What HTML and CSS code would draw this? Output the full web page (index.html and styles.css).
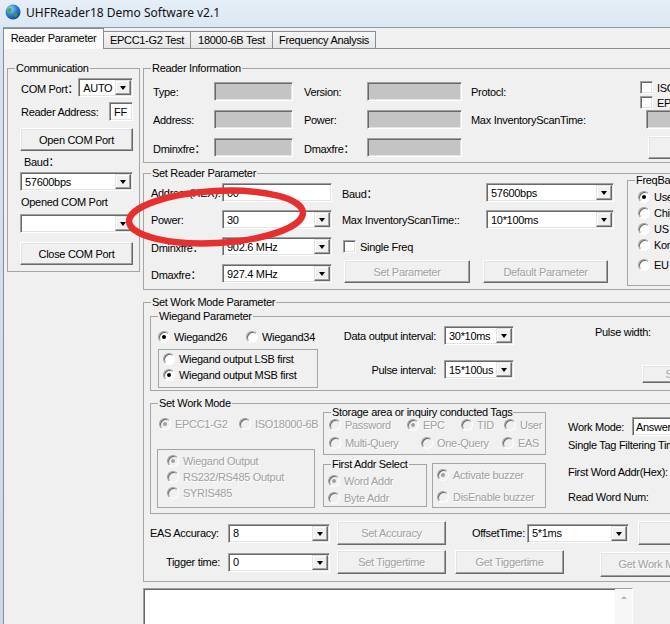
FILE: index.html
```html
<!DOCTYPE html>
<html lang="en">
<head>
  <meta charset="UTF-8">
  <title>UHFReader18 Demo Software v2.1</title>
  <link rel="stylesheet" href="styles.css">
</head>
<body>
<div class="window">
  <div class="titlebar">
    <svg class="app-icon" viewBox="0 0 16 16">
      <defs>
        <radialGradient id="sea" cx="0.35" cy="0.3" r="0.8">
          <stop offset="0" stop-color="#9ad6ff"/>
          <stop offset="0.5" stop-color="#2f7fd6"/>
          <stop offset="1" stop-color="#0d3c8c"/>
        </radialGradient>
      </defs>
      <circle cx="8" cy="8" r="7.5" fill="url(#sea)"/>
      <path d="M3 5 C5 3 7 4 7 6 C6 8 4 8 4 10 C3 9 2 7 3 5Z" fill="#4caf3c"/>
      <path d="M9 9 C11 8 13 9 12 12 C11 14 9 13 9 11Z" fill="#3f9a32"/>
    </svg>
    <span class="title">UHFReader18 Demo Software v2.1</span>
  </div>

  <div class="client">
    <div class="tabs">
      <div class="tab active t1">Reader Parameter</div>
      <div class="tab t2">EPCC1-G2 Test</div>
      <div class="tab t3">18000-6B Test</div>
      <div class="tab t4">Frequency Analysis</div>
    </div>

    <div class="panel">
      <!-- communication -->
      <fieldset class="group comm">
        <legend>Communication</legend>
        <div class="comm-body">
          <div class="line r1"><span class="lbl">COM Port：</span><div class="field w60">AUTO<span class="drop"></span></div></div>
          <div class="line r2"><span class="lbl">Reader Address:</span><div class="field w24">FF</div></div>
          <div class="btn wide r3">Open COM Port</div>
          <span class="lbl baud">Baud：</span>
          <div class="field wide r5">57600bps<span class="drop"></span></div>
          <span class="lbl opened">Opened COM Port</span>
          <div class="field wide r7"><span class="drop"></span></div>
          <div class="btn wide r8">Close COM Port</div>
        </div>
      </fieldset>

      <div class="main">
        <!-- reader information -->
        <fieldset class="group info">
          <legend>Reader Information</legend>
          <div class="info-grid">
            <span class="lbl lead">Type:</span><div class="field ro"></div>
            <span class="lbl mid">Version:</span><div class="field ro"></div>
            <span class="lbl tail">Protocl:</span>
            <div class="checks">
              <label class="chk"><span class="cb"></span>ISO18000-6B</label>
              <label class="chk"><span class="cb"></span>EPCC1-G2</label>
            </div>
            <span class="lbl lead">Address:</span><div class="field ro"></div>
            <span class="lbl mid">Power:</span><div class="field ro"></div>
            <span class="lbl tail">Max InventoryScanTime:</span>
            <div class="field ro scan"></div>
            <span class="lbl lead">Dminxfre：</span><div class="field ro"></div>
            <span class="lbl mid">Dmaxfre：</span><div class="field ro"></div>
            <span></span>
            <div class="btn info-btn"></div>
          </div>
        </fieldset>

        <!-- set reader parameter -->
        <fieldset class="group setparam">
          <legend>Set Reader Parameter</legend>
          <div class="param-grid">
            <fieldset class="group freq">
              <legend>FreqBand</legend>
              <div class="freq-list">
                <label class="opt"><span class="rd on"></span>User band</label>
                <label class="opt"><span class="rd"></span>Chinese band</label>
                <label class="opt"><span class="rd"></span>US band</label>
                <label class="opt"><span class="rd"></span>Korean band</label>
                <label class="opt eu"><span class="rd"></span>EU band</label>
              </div>
            </fieldset>
            <span class="lbl lead">Address(HEX):</span>
            <div class="field">00</div>
            <span class="lbl mid">Baud：</span>
            <div class="field">57600bps<span class="drop"></span></div>
            <span class="lbl lead">Power:</span>
            <div class="field">30<span class="drop"></span></div>
            <span class="lbl mid">Max InventoryScanTime::</span>
            <div class="field">10*100ms<span class="drop"></span></div>
            <span class="lbl lead">Dminxfre：</span>
            <div class="field">902.6 MHz<span class="drop"></span></div>
            <label class="chk single"><span class="cb"></span>Single Freq</label>
            <span></span>
            <span class="lbl lead">Dmaxfre：</span>
            <div class="field">927.4 MHz<span class="drop"></span></div>
            <div class="btn off set-btn">Set Parameter</div>
            <div class="btn off def-btn">Default Parameter</div>
          </div>
        </fieldset>

        <!-- set work mode parameter -->
        <fieldset class="group params">
          <legend>Set Work Mode Parameter</legend>
          <div class="params-body">
            <fieldset class="group wiegand">
              <legend>Wiegand Parameter</legend>
              <div class="wg-body">
                <div class="wg-left">
                  <div class="opts">
                    <label class="opt w88"><span class="rd on"></span>Wiegand26</label>
                    <label class="opt"><span class="rd"></span>Wiegand34</label>
                  </div>
                  <div class="box wg-box">
                    <label class="opt"><span class="rd"></span>Wiegand output LSB first</label>
                    <label class="opt"><span class="rd on"></span>Wiegand output MSB first</label>
                  </div>
                </div>
                <div class="wg-mid">
                  <span class="lbl">Data output interval:</span>
                  <div class="field">30*10ms<span class="drop"></span></div>
                  <span class="lbl">Pulse interval:</span>
                  <div class="field">15*100us<span class="drop"></span></div>
                </div>
                <div class="wg-right">
                  <span class="lbl">Pulse width:</span>
                  <div class="btn off pulse-btn">Set Parameter</div>
                </div>
              </div>
            </fieldset>

            <fieldset class="group workmode">
              <legend>Set Work Mode</legend>
              <div class="wm-body">
                <div class="wm-left off">
                  <div class="opts">
                    <label class="opt w80"><span class="rd on"></span>EPCC1-G2</label>
                    <label class="opt"><span class="rd"></span>ISO18000-6B</label>
                  </div>
                  <div class="box out-box">
                    <label class="opt"><span class="rd on"></span>Wiegand Output</label>
                    <label class="opt"><span class="rd"></span>RS232/RS485 Output</label>
                    <label class="opt"><span class="rd"></span>SYRIS485</label>
                  </div>
                </div>
                <div class="wm-mid">
                  <fieldset class="group storage">
                    <legend>Storage area or inquiry conducted Tags</legend>
                    <div class="storage-body off">
                      <div class="opts">
                        <label class="opt w78"><span class="rd"></span>Password</label>
                        <label class="opt w54"><span class="rd on"></span>EPC</label>
                        <label class="opt w43"><span class="rd"></span>TID</label>
                        <label class="opt"><span class="rd"></span>User</label>
                      </div>
                      <div class="opts gap2">
                        <label class="opt w92"><span class="rd"></span>Multi-Query</label>
                        <label class="opt w81"><span class="rd"></span>One-Query</label>
                        <label class="opt"><span class="rd"></span>EAS</label>
                      </div>
                    </div>
                  </fieldset>
                  <div class="opts lower">
                    <fieldset class="group first-addr">
                      <legend>First Addr Select</legend>
                      <div class="addr-body off">
                        <label class="opt"><span class="rd on"></span>Word Addr</label>
                        <label class="opt"><span class="rd"></span>Byte Addr</label>
                      </div>
                    </fieldset>
                    <div class="box buzzer off">
                      <label class="opt"><span class="rd on"></span>Activate buzzer</label>
                      <label class="opt"><span class="rd"></span>DisEnable buzzer</label>
                    </div>
                  </div>
                </div>
                <div class="wm-right">
                  <div class="line mode-line"><span class="lbl">Work Mode:</span><div class="field mode">Answer Mode</div></div>
                  <span class="lbl filter">Single Tag Filtering Time:</span>
                  <span class="lbl word-addr">First Word Addr(Hex):</span>
                  <span class="lbl word-num">Read Word Num:</span>
                </div>
              </div>
            </fieldset>

            <div class="act-row first">
              <span class="lbl act-lbl">EAS Accuracy:</span>
              <div class="field w102">8<span class="drop"></span></div>
              <div class="btn off act-btn">Set Accuracy</div>
              <span class="lbl offset-lbl">OffsetTime:</span>
              <div class="field w102">5*1ms<span class="drop"></span></div>
              <div class="btn off offset-btn">Set OffsetTime</div>
            </div>
            <div class="act-row second">
              <span class="lbl act-lbl right">Tigger time:</span>
              <div class="field w102">0<span class="drop"></span></div>
              <div class="btn off act-btn">Set Tiggertime</div>
              <div class="btn off act-btn get">Get Tiggertime</div>
              <div class="btn off getwork-btn">Get Work Mode</div>
            </div>
          </div>
        </fieldset>

        <div class="log">
          <div class="scroll"><span class="up"></span></div>
        </div>
      </div>
    </div>
  </div>

  <svg class="mark" viewBox="0 0 670 624">
    <ellipse cx="216" cy="217" rx="87" ry="26" transform="rotate(-3 216 217)" fill="none" stroke="#e62f2f" stroke-width="6.5"/>
  </svg>
</div>
</body>
</html>
```

FILE: styles.css
```css
* {
  box-sizing: border-box;
}
body {
  margin: 0;
  width: 670px;
  height: 624px;
  overflow: hidden;
  font-family: "Liberation Sans", "Noto Sans CJK SC", sans-serif;
  font-size: 11px;
  letter-spacing: -0.3px;
  color: #000;
}
.window {
  position: relative;
  height: 624px;
  background: linear-gradient(#e6eff8, #d6e3f0 40px, #c9d9e9);
}

/* title bar */
.titlebar {
  height: 27px;
  display: flex;
  align-items: center;
  gap: 5px;
  padding: 0 0 3px 5px;
}
.app-icon {
  width: 16px;
  height: 16px;
}
.title {
  font-family: "Noto Sans", sans-serif;
  font-size: 12px;
  letter-spacing: 0;
  color: #111;
}

/* client + tabs */
.client {
  margin-left: 3px;
  height: 597px;
  display: flex;
  flex-direction: column;
  background: #f0f0f0;
  border-top: 1px solid #8e9aa7;
}
.tabs {
  display: flex;
  align-items: flex-end;
  height: 20px;
  position: relative;
  z-index: 1;
}
.tab {
  height: 17px;
  margin-left: -1px;
  display: flex;
  align-items: center;
  justify-content: center;
  border: 1px solid #898c95;
  border-bottom: none;
  background: linear-gradient(#f6f6f6, #e5e5e5);
  white-space: nowrap;
}
.tab.active {
  height: 21px;
  margin: 0 0 -1px 0;
  padding-bottom: 2px;
  background: #fafafa;
  position: relative;
  z-index: 1;
}
.t1 { width: 101px; }
.t2 { width: 88px; }
.t3 { width: 83px; }
.t4 { width: 104px; }

.panel {
  flex: 1;
  display: flex;
  align-items: flex-start;
  gap: 3px;
  padding: 12px 0 0 3px;
  border-top: 1px solid #898c95;
  border-left: 1px solid #898c95;
}

/* common controls */
.group {
  margin: 0;
  padding: 0;
  min-width: 0;
  border: 1px solid #a5a5a5;
}
.group > legend {
  margin-left: 7px;
  padding: 0 1px;
  line-height: 14px;
}
.lbl {
  white-space: nowrap;
}
.line {
  display: flex;
  align-items: center;
  justify-content: space-between;
  height: 19px;
}
.field {
  height: 19px;
  display: flex;
  align-items: center;
  padding: 0 1px 0 4px;
  background: #fff;
  border: 1px solid;
  border-color: #a0a0a0 #fff #fff #a0a0a0;
  box-shadow: inset 1px 1px 0 #696969, inset -1px -1px 0 #e3e3e3;
  white-space: nowrap;
  overflow: hidden;
}
.field.ro {
  background: #c4c4c4;
}
.drop {
  margin-left: auto;
  width: 16px;
  height: 15px;
  flex: none;
  position: relative;
  background: #f0f0f0;
  border: 1px solid;
  border-color: #e3e3e3 #696969 #696969 #e3e3e3;
  box-shadow: inset -1px -1px 0 #a0a0a0, inset 1px 1px 0 #fff;
}
.drop::after {
  content: "";
  position: absolute;
  left: 4px;
  top: 5px;
  border-left: 3.5px solid transparent;
  border-right: 3.5px solid transparent;
  border-top: 4px solid #000;
}
.btn {
  height: 23px;
  display: flex;
  align-items: center;
  justify-content: center;
  flex: none;
  background: #f0f0f0;
  border: 1px solid;
  border-color: #fff #696969 #696969 #fff;
  box-shadow: inset -1px -1px 0 #a0a0a0, inset 1px 1px 0 #e3e3e3;
  white-space: nowrap;
}
.off,
.off .opt {
  color: #a0a0a0;
  text-shadow: 1px 1px 0 #fff;
}
.opts {
  display: flex;
}
.opt {
  display: flex;
  align-items: center;
  gap: 4px;
  height: 16px;
  flex: none;
  white-space: nowrap;
}
.rd {
  width: 12px;
  height: 12px;
  flex: none;
  position: relative;
  border-radius: 50%;
  background: #fff;
  border: 1px solid;
  border-color: #a0a0a0 #fff #fff #a0a0a0;
  box-shadow: inset 1px 1px 0 #696969;
}
.rd.on::after {
  content: "";
  position: absolute;
  left: 3px;
  top: 3px;
  width: 4px;
  height: 4px;
  border-radius: 50%;
  background: #000;
}
.off .rd {
  background: #f0f0f0;
}
.off .rd.on::after {
  background: #a0a0a0;
}
.chk {
  display: flex;
  align-items: center;
  gap: 4px;
  white-space: nowrap;
}
.cb {
  width: 13px;
  height: 13px;
  flex: none;
  background: #fff;
  border: 1px solid;
  border-color: #a0a0a0 #fff #fff #a0a0a0;
  box-shadow: inset 1px 1px 0 #696969, inset -1px -1px 0 #e3e3e3;
}
.box {
  border: 1px solid #a5a5a5;
}
.w24 { width: 24px; }
.w43 { width: 43px; }
.w54 { width: 54px; }
.w60 { width: 60px; }
.w78 { width: 78px; }
.w80 { width: 80px; }
.w81 { width: 81px; }
.w88 { width: 88px; }
.w92 { width: 92px; }
.w102 { width: 102px; }

/* communication */
.comm {
  width: 133px;
  flex: none;
}
.comm-body {
  display: flex;
  flex-direction: column;
  align-items: flex-start;
  padding: 0 0 6px 12px;
}
.comm-body .line {
  width: 113px;
}
.comm-body .line .lbl {
  padding-left: 1px;
}
.wide { width: 113px; }
.r1 { margin-top: 3px; }
.r2 { margin-top: 5px; }
.r3 { margin-top: 7px; }
.baud {
  margin-top: 5px;
  padding-left: 4px;
  line-height: 13px;
}
.r5 { margin-top: 3px; }
.opened {
  margin-top: 5px;
  padding-left: 1px;
  line-height: 13px;
}
.r7 { margin-top: 5px; }
.r8 { margin-top: 9px; }

/* right column */
.main {
  width: 580px;
  flex: none;
  display: flex;
  flex-direction: column;
}

.info-grid {
  display: grid;
  grid-template-columns: 70px 79px 74px 95px 177px 1fr;
  grid-template-rows: repeat(3, 19px);
  row-gap: 9px;
  align-items: center;
  padding: 7px 0 5px;
}
.info-grid .lead { padding-left: 9px; }
.info-grid .mid { padding-left: 11px; }
.info-grid .tail { padding-left: 9px; }
.checks {
  align-self: start;
  margin: -2px 0 0 1px;
}
.checks .chk {
  height: 15px;
}
.info-grid .scan {
  justify-self: start;
  width: 60px;
  margin-left: 7px;
}
.info-btn {
  justify-self: start;
  width: 80px;
  margin-left: 9px;
}

.setparam {
  margin-top: 3px;
}
.param-grid {
  display: grid;
  grid-template-columns: 78px 110px 154px 128px 1fr;
  grid-template-rows: repeat(4, 19px);
  row-gap: 8px;
  align-items: center;
  padding: 3px 0 6px;
}
.param-grid .lead { padding-left: 7px; }
.param-grid .mid { padding-left: 10px; }
.single {
  margin-left: 11px;
}
.set-btn {
  align-self: end;
  width: 126px;
  margin-left: 12px;
}
.def-btn {
  align-self: end;
  width: 125px;
  margin-left: -3px;
}
.freq {
  grid-column: 5;
  grid-row: 1 / 5;
  align-self: start;
  width: 90px;
  height: 113px;
  margin: -10px 0 0 13px;
}
.freq-list {
  padding: 2px 0 0 10px;
}
.freq-list .eu {
  margin-top: 4px;
}

/* work mode parameter */
.params {
  margin-top: 5px;
}
.params-body {
  padding: 0 0 7px 6px;
}
.wiegand {
  width: 570px;
}
.wg-body {
  display: flex;
  align-items: flex-start;
  padding: 0 0 2px 7px;
}
.wg-left {
  width: 160px;
  flex: none;
}
.wg-left .opts {
  margin-top: 6px;
}
.wg-box {
  margin-top: 4px;
  height: 39px;
  padding: 1px 0 0 4px;
}
.wg-mid {
  margin: 3px 0 0 24px;
  display: grid;
  grid-template-columns: 102px 70px;
  grid-template-rows: 19px 19px;
  row-gap: 15px;
  align-items: center;
}
.wg-mid .lbl {
  text-align: right;
  padding-right: 8px;
}
.wg-right {
  margin: 3px 0 0 81px;
  display: flex;
  flex-direction: column;
  align-items: flex-start;
}
.wg-right .lbl {
  line-height: 13px;
}
.pulse-btn {
  width: 114px;
  height: 18px;
  margin: 26px 0 0 47px;
}

.workmode {
  width: 570px;
  margin-top: 5px;
}
.wm-body {
  display: flex;
  align-items: flex-start;
  padding: 0 0 5px 6px;
}
.wm-left {
  width: 158px;
  flex: none;
}
.wm-left .opts {
  margin: 6px 0 0 2px;
}
.out-box {
  margin-top: 17px;
  height: 59px;
  padding: 3px 0 0 9px;
}
.wm-mid {
  width: 223px;
  flex: none;
  margin-left: 8px;
}
.storage {
  margin-top: -5px;
}
.storage-body {
  margin-top: -2px;
  padding: 0 0 3px 5px;
}
.gap2 {
  margin-top: 2px;
}
.lower {
  align-items: flex-start;
}
.first-addr {
  width: 104px;
  flex: none;
  margin-top: 2px;
}
.addr-body {
  display: flex;
  flex-direction: column;
  gap: 2px;
  padding: 2px 0 1px 4px;
}
.addr-body .opt {
  height: 15px;
}
.buzzer {
  width: 114px;
  height: 45px;
  flex: none;
  margin: 8px 0 0 5px;
  padding: 3px 0 0 4px;
  display: flex;
  flex-direction: column;
  gap: 6px;
}
.wm-right {
  margin-left: 22px;
  display: flex;
  flex-direction: column;
  align-items: flex-start;
}
.mode-line {
  margin-top: 7px;
  justify-content: flex-start;
}
.mode-line .lbl {
  width: 64px;
}
.field.mode {
  width: 100px;
  padding-left: 3px;
}
.wm-right > .lbl {
  line-height: 13px;
}
.filter { margin-top: 3px; }
.word-addr { margin-top: 14px; }
.word-num { margin-top: 12px; }

.act-row {
  display: flex;
  align-items: center;
  height: 24px;
}
.act-row > * {
  flex: none;
}
.act-row.first { margin-top: 7px; }
.act-row.second { margin-top: 5px; }
.act-lbl {
  width: 78px;
}
.act-lbl.right {
  text-align: right;
  padding-right: 8px;
}
.act-row .btn {
  height: 24px;
}
.act-btn {
  width: 109px;
  margin-left: 7px;
}
.act-btn.get {
  margin-left: 9px;
}
.offset-lbl {
  width: 55px;
  margin-left: 26px;
}
.offset-btn {
  width: 140px;
  margin-left: 9px;
}
.act-row .getwork-btn {
  width: 110px;
  height: 25px;
  margin: 4px 0 0 36px;
}

/* log */
.log {
  margin-top: 6px;
  width: 490px;
  height: 60px;
  display: flex;
  justify-content: flex-end;
  background: #fff;
  border: 1px solid;
  border-color: #a0a0a0 #fff #fff #a0a0a0;
  box-shadow: inset 1px 1px 0 #696969;
}
.scroll {
  width: 17px;
  background: #f7f7f7;
  display: flex;
  justify-content: center;
  padding-top: 7px;
}
.up {
  width: 0;
  height: 0;
  border-left: 3px solid transparent;
  border-right: 3px solid transparent;
  border-bottom: 3px solid #b5b5b5;
}

/* red marker drawn on the screenshot */
.mark {
  position: absolute;
  left: 0;
  top: 0;
  width: 670px;
  height: 624px;
  pointer-events: none;
}
```
